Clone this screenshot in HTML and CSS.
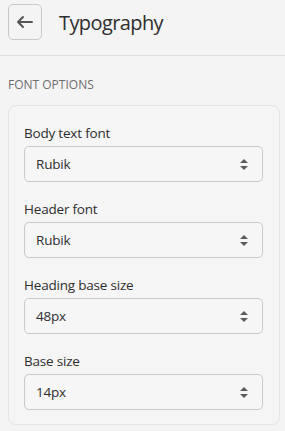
FILE: index.html
```html
<!DOCTYPE html>
<html lang="en">
<head>
    <meta charset="UTF-8">
    <meta name="viewport" content="width=device-width, initial-scale=1.0">
    <title>Typography</title>
    <link rel="stylesheet" href="styles.css">
</head>
<body>
    <header class="topbar">
        <button class="back-btn" aria-label="Back">
            <svg width="18" height="14" viewBox="0 0 18 14" fill="none" stroke="#555" stroke-width="2" stroke-linecap="round" stroke-linejoin="round">
                <path d="M16 7H2M7 2L2 7l5 5"/>
            </svg>
        </button>
        <h1>Typography</h1>
    </header>

    <section class="section">
        <h2 class="section-title">Font options</h2>

        <div class="card">
            <div class="field">
                <label>Body text font</label>
                <div class="select">
                    <span>Rubik</span>
                    <i class="arrows"></i>
                </div>
            </div>
            <div class="field">
                <label>Header font</label>
                <div class="select">
                    <span>Rubik</span>
                    <i class="arrows"></i>
                </div>
            </div>
            <div class="field">
                <label>Heading base size</label>
                <div class="select">
                    <span>48px</span>
                    <i class="arrows"></i>
                </div>
            </div>
            <div class="field">
                <label>Base size</label>
                <div class="select">
                    <span>14px</span>
                    <i class="arrows"></i>
                </div>
            </div>
        </div>
    </section>
</body>
</html>
```

FILE: styles.css
```css
body {
    font-family: 'Open Sans', 'Noto Sans', sans-serif;
    margin: 0;
    background-color: #f4f4f4;
    color: #303030;
}
.topbar {
    display: flex;
    align-items: center;
    height: 56px;
    padding: 0 8px;
    border-bottom: 1px solid #dedede;
    box-sizing: border-box;
}
.back-btn {
    width: 34px;
    height: 36px;
    margin-top: -12px;
    display: flex;
    align-items: center;
    justify-content: center;
    background: transparent;
    border: 1px solid #c8c8c8;
    border-radius: 5px;
    padding: 0;
}
.topbar h1 {
    margin: -10px 0 0 17px;
    font-size: 20px;
    font-weight: 400;
    letter-spacing: -0.6px;
    color: #2e2e2e;
}
.section {
    padding: 21px 5px 0 8px;
}
.section-title {
    margin: 0 0 12px;
    font-size: 12px;
    font-weight: 400;
    text-transform: uppercase;
    color: #6e6e6e;
    line-height: 16px;
}
.card {
    border: 1px solid #e4e4e4;
    border-radius: 8px;
    background-color: #f5f5f5;
    padding: 17px 16px 14px 15px;
}
.field + .field {
    margin-top: 17px;
}
.field label {
    display: block;
    font-size: 13.5px;
    letter-spacing: -0.2px;
    line-height: 20px;
    margin-bottom: 3px;
    color: #2e2e2e;
}
.select {
    display: flex;
    align-items: center;
    justify-content: space-between;
    height: 36px;
    box-sizing: border-box;
    padding: 0 14px 0 11px;
    border: 1px solid #c9c9c9;
    border-radius: 5px;
    background-color: #f6f6f6;
    font-size: 13.5px;
    letter-spacing: -0.2px;
    color: #2e2e2e;
}
.arrows {
    position: relative;
    width: 8px;
    height: 11px;
}
.arrows::before,
.arrows::after {
    content: "";
    position: absolute;
    left: 0;
    border-left: 4px solid transparent;
    border-right: 4px solid transparent;
}
.arrows::before {
    top: 0;
    border-bottom: 4px solid #5a5a5a;
}
.arrows::after {
    bottom: 0;
    border-top: 4px solid #5a5a5a;
}
```
